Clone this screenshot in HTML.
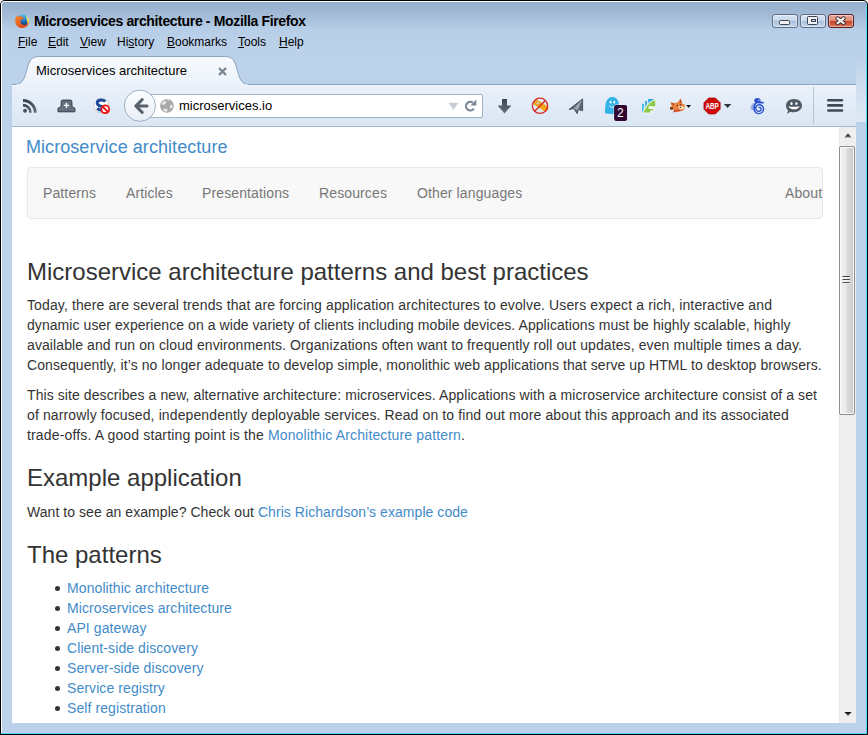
<!DOCTYPE html>
<html><head><meta charset="utf-8">
<style>
*{margin:0;padding:0;box-sizing:border-box}
html,body{width:868px;height:735px;overflow:hidden;background:#fff}
body{position:relative;font-family:"Liberation Sans",sans-serif}
.a{position:absolute;white-space:nowrap}
#win{position:absolute;left:0;top:0;width:868px;height:735px;border-radius:5px 5px 0 0;background:#000}
#frame{position:absolute;left:1px;top:1px;width:866px;height:733px;border-radius:4px 4px 0 0;
 background:linear-gradient(#fff 0,#fff 1px,#97b0cf 1px,#9cb5d2 8px,#a8bfda 18px,#b7cee8 28px,#bbd1ea 40px,#bcd2ea 56px,#bcd2ea 735px);
 box-shadow:inset 1px 0 0 #fff}
#cyanr{position:absolute;left:866px;top:4px;width:1px;height:730px;background:#52d6fa}
#cyanb{position:absolute;left:1px;top:733px;width:866px;height:1px;background:#52d6fa}
.title{font-size:14px;font-weight:bold;color:#000;letter-spacing:-.35px;left:34px;top:13px;line-height:17px}
.menu{font-size:12px;color:#000;top:35px;line-height:15px}
.menu u{text-decoration:underline;text-underline-offset:0.5px;text-decoration-thickness:1px}
.wbtn{position:absolute;top:14px;height:14px;width:26px;border:1px solid #5f6f86;border-radius:3px;
 background:linear-gradient(#d6e3f2 0,#c8d9ed 45%,#a9c1dd 52%,#b4cae4 75%,#c4d7ee 100%);box-shadow:inset 0 0 0 1px rgba(255,255,255,.45)}
.wbtn.cl{border-color:#5a1a22;background:linear-gradient(#eba999 0,#e08d78 45%,#c9472d 52%,#cf5a3f 75%,#de7b60 100%)}
.gl{position:absolute;background:#f2f2f2;border:1px solid #3c4350}
#toolbar{position:absolute;left:12px;top:84px;width:844px;height:43px;
 background:linear-gradient(#eaf1fa,#dae6f4);border-bottom:1px solid #a7b9ce}
#content{position:absolute;left:12px;top:127px;width:827px;height:596px;background:#fff;overflow:hidden}
#sb{position:absolute;left:839px;top:127px;width:17px;height:596px;background:linear-gradient(90deg,#e4e4e4 0,#eeeeee 1px,#efefef 100%)}
.c{font-size:14px;color:#333;line-height:20px}
.lk{color:#428bca}
.h{font-size:24px;color:#333;line-height:28px}
.nv{color:#777;letter-spacing:.12px}
</style></head><body>
<div id="win"></div>
<div id="frame"></div>
<div id="cyanr"></div><div id="cyanb"></div>
<div class="a" style="left:856px;top:56px;width:10px;height:66px;background:linear-gradient(#bcd2ea,#d3e1f0 60%,#dfe9f4)"></div>

<!-- firefox logo -->
<svg class="a" style="left:15px;top:14px" width="14" height="14" viewBox="0 0 14 14">
 <defs><linearGradient id="ffg" x1="0" y1="0" x2="0" y2="1"><stop offset="0" stop-color="#4cc0ee"/><stop offset=".55" stop-color="#1f7bc4"/><stop offset="1" stop-color="#14306e"/></linearGradient>
 <linearGradient id="ffo" x1="0" y1="0" x2="1" y2="1"><stop offset="0" stop-color="#f58a2a"/><stop offset=".6" stop-color="#e4561e"/><stop offset="1" stop-color="#d63a18"/></linearGradient>
 <linearGradient id="ffy" x1="0" y1="0" x2="0" y2="1"><stop offset="0" stop-color="#fff3b0"/><stop offset=".5" stop-color="#ffd428"/><stop offset="1" stop-color="#f39a1a"/></linearGradient></defs>
 <circle cx="7.8" cy="6.2" r="5.7" fill="url(#ffg)"/>
 <path d="M11.2 1.8C13.2 3.4 14.2 5.6 14 8 13.6 10.5 12.6 11.5 11.5 12.4 12.8 10 12.6 7 11.5 4.6Z" fill="url(#ffy)"/>
 <path d="M7 14C3.2 14 0.3 11 0.3 7.2C0.3 5 0.8 3 1.2 1.3L2.6 2.8C3.8 2.2 5.5 2 6.8 2.6L9.4 4.4 7.8 4.7C6.5 5.2 5.6 6.4 5.4 7.6 5.6 9.6 7.4 11 9.6 11 11.4 11 12.8 9.8 13.6 8.2 13.4 11.6 10.6 14 7 14Z" fill="url(#ffo)"/>
</svg>
<div class="a title">Microservices architecture - Mozilla Firefox</div>

<!-- window buttons -->
<div class="wbtn" style="left:772px"><div class="gl" style="left:6px;top:5px;width:11px;height:5px;border-radius:1.5px"></div></div>
<div class="wbtn" style="left:800px"><div class="gl" style="left:6px;top:1px;width:11px;height:9px;border-radius:1.5px"><div style="position:absolute;left:3px;top:2px;width:5px;height:3px;border:1px solid #3c4350;background:#b9cde6"></div></div></div>
<div class="wbtn cl" style="left:828px">
 <svg style="position:absolute;left:5px;top:1px" width="14" height="11" viewBox="0 0 14 11"><path d="M3.6 2.3L9.6 7.1M9.6 2.3L3.6 7.1" stroke="#3a2a30" stroke-width="4" stroke-linecap="round"/><path d="M3.6 2.3L9.6 7.1M9.6 2.3L3.6 7.1" stroke="#f2f2f2" stroke-width="2.3" stroke-linecap="round"/></svg></div>

<div class="a menu" style="left:18px"><u>F</u>ile</div>
<div class="a menu" style="left:48px"><u>E</u>dit</div>
<div class="a menu" style="left:80px"><u>V</u>iew</div>
<div class="a menu" style="left:117px">Hi<u>s</u>tory</div>
<div class="a menu" style="left:167px"><u>B</u>ookmarks</div>
<div class="a menu" style="left:238px"><u>T</u>ools</div>
<div class="a menu" style="left:279px"><u>H</u>elp</div>

<div id="toolbar"></div>
<svg class="a" style="left:0;top:0" width="868" height="130" viewBox="0 0 868 130">
 <defs><linearGradient id="tg" x1="0" y1="56" x2="0" y2="86" gradientUnits="userSpaceOnUse"><stop offset="0" stop-color="#f8fbfe"/><stop offset="1" stop-color="#ebf2fa"/></linearGradient></defs>
 <path d="M12 84.5L15 84.5C23 84.5 25 77 27 69 29 62 31 56.5 38.5 56.5L225.5 56.5C233 56.5 235 62 237 69 239 77 241 84.5 249 84.5L856 84.5" fill="url(#tg)" stroke="#8ba2bd" stroke-width="1"/>
 <rect x="12" y="85" width="844" height="1" fill="#f4f8fd" opacity=".8"/>
 <path d="M16 85L248 85" stroke="#ebf2fa" stroke-width="1"/>
 <line x1="813.5" y1="87" x2="813.5" y2="124" stroke="#b4c3d5" stroke-width="1"/>
</svg>
<div class="a" style="left:36px;top:63px;font-size:13px;color:#000;line-height:15px">Microservices architecture</div>
<svg class="a" style="left:217px;top:66px" width="11" height="11" viewBox="0 0 11 11"><path d="M2 2L9 9M9 2L2 9" stroke="#7b8592" stroke-width="2.4"/></svg>
<!-- urlbar -->
<div class="a" style="left:146px;top:94px;width:337px;height:24px;background:#fff;border:1px solid #a3b3c6;border-radius:0 2px 2px 0"></div>
<svg class="a" style="left:0;top:84px" width="868" height="42" viewBox="0 84 868 42">
 <defs>
  <linearGradient id="ig" x1="0" y1="0" x2="0" y2="1"><stop offset="0" stop-color="#3c454f"/><stop offset="1" stop-color="#66717d"/></linearGradient>
  <linearGradient id="bg" x1="0" y1="0" x2="0" y2="1"><stop offset="0" stop-color="#fbfcfe"/><stop offset="1" stop-color="#e9eff7"/></linearGradient>
  <linearGradient id="fg" x1="0" y1="0" x2="1" y2="1"><stop offset="0" stop-color="#b8e07a"/><stop offset="1" stop-color="#6cb828"/></linearGradient>
  <linearGradient id="bl" x1="0" y1="0" x2="0" y2="1"><stop offset="0" stop-color="#1aa4e0"/><stop offset="1" stop-color="#7cccee"/></linearGradient>
  <radialGradient id="sg" cx=".4" cy=".35" r=".7"><stop offset=".6" stop-color="#fff"/><stop offset="1" stop-color="#a8a8a8"/></radialGradient>
 </defs>
 <!-- rss -->
 <g fill="none" stroke="url(#ig)">
  
  <path d="M23 100.45A12.25 12.25 0 0 1 35.25 112.7" stroke-width="2.9"/>
 </g>
 <circle cx="25" cy="110.8" r="2" fill="#4a535e"/>
 <!-- tab add -->
 <path d="M58 111.8L58 108.5C58 108 58.4 108 59 107.8 60.5 107.3 61.2 106.5 61.2 104L61.2 101.5C61.2 100.6 61.8 100.1 62.7 100.1L70.4 100.1C71.3 100.1 71.9 100.6 71.9 101.5L71.9 104C71.9 106.5 72.6 107.3 74.1 107.8 74.6 108 74.9 108 74.9 108.5L74.9 111.8Z" fill="#63707d" stroke="#323b45" stroke-width="1"/>
 <path d="M66.5 102.8V108M63.9 105.4H69.1" stroke="#fff" stroke-width="1.4"/>
 <!-- S block -->
 <circle cx="101.9" cy="105.7" r="7.6" fill="url(#sg)" stroke="#c4c4c4" stroke-width=".6"/>
 <path d="M105.4 101.6C104.4 100.5 102.9 100 101.2 100 98.9 100 97.2 101.2 97.2 103.1 97.2 107.2 104 105.6 104 108.2 104 109.5 102.6 110 101.3 110 99.6 110 98.3 109.3 97.4 108.3" fill="none" stroke="#1c4a9c" stroke-width="2.9"/>
 <circle cx="105.3" cy="109.3" r="3.9" fill="#fff" stroke="#f00c0c" stroke-width="1.7"/>
 <path d="M102.6 106.6L108 112" stroke="#f00c0c" stroke-width="1.9"/>
 <path d="M23 105.2A7.5 7.5 0 0 1 30.5 112.7" stroke="url(#ig)" stroke-width="2.7" fill="none"/>
 <!-- back button -->
 <circle cx="139.9" cy="105.7" r="15.6" fill="url(#bg)" stroke="#9eb0c4" stroke-width="1"/>
 <path d="M147 106H135.8M142.2 99.6L135.8 106 142.2 112.4" fill="none" stroke="#56616d" stroke-width="3" stroke-linecap="round" stroke-linejoin="round"/>
 <!-- globe -->
 <circle cx="167" cy="105.8" r="6.9" fill="#a9a9a9"/>
 <path d="M162.3 102.2C163.8 100.8 165.8 100.8 166.3 102 166.6 103.2 164.8 104.6 163.2 105 162 105.2 161.6 103.4 162.3 102.2ZM163.6 109C165 108 167 108.4 167.6 109.6 168 111 166.2 112.3 164.6 111.6 163.6 111 163.1 109.8 163.6 109ZM170.6 104.6C171.6 104.2 172.6 105.2 172.6 106.4 172.4 107.8 171.4 108.8 170.6 108.6 169.8 108.2 169.8 105.2 170.6 104.6ZM166.8 99.6C167.8 99.3 169.2 99.6 169.4 100.2 168.8 100.9 167.2 100.9 166.8 99.6Z" fill="#e6e6e6"/>
 <!-- dropdown & reload -->
 <path d="M448.5 102.8H458.5L453.5 110Z" fill="#c9ced4"/>
 <path d="M473.8 108.6A4.3 4.3 0 1 1 472.8 102.6" fill="none" stroke="#7d8896" stroke-width="2.2"/>
 <path d="M476.3 99.6L476.3 105.6 470.4 105.6Z" fill="#7d8896"/>
 <!-- download -->
 <path d="M502 99H507V105.6H511.3L504.5 113.4 497.7 105.6H502Z" fill="url(#ig)"/>
 <!-- no cookie -->
 <path d="M534.5 100.8C535.5 99.8 537 99.6 538 100.2L547.6 106.6C548.6 107.3 548.8 108.4 548 109.4L546.8 110.8C546 111.6 545 111.6 544 111L535 105.2C533.8 104.4 533.4 102.6 534.5 100.8Z" fill="#f2a61c"/>
 <circle cx="537.8" cy="103.2" r="1.1" fill="#b8d4f0"/>
 <circle cx="540" cy="105.8" r="7.6" fill="none" stroke="#d42c2c" stroke-width="1.3"/>
 <path d="M534.6 111.2L545.4 100.4" stroke="#d42c2c" stroke-width="1.4"/>
 <!-- plane -->
 <path d="M569 109.5L582.6 98.8 582.6 110.8 578.3 109.6 577.2 113.8 573.8 108.6Z" fill="#5c6772" stroke="#3a434d" stroke-width=".8" stroke-linejoin="round"/>
 <path d="M573.8 108.6L582.2 99.6 577.6 110.2" fill="#c9d3dd" opacity=".6"/>
 <!-- ghostery -->
 <path d="M605 112C605 108 605.5 104 606 102 607 99 609.5 97 612.2 97 615.5 97 618.6 99.5 618.8 103.5 619 107 619.2 110 619.6 113 618.4 113.6 617.6 112.6 616.8 113.6 615.8 114.4 614.8 113 613.6 114 612.4 114.6 611.4 113.4 610.2 114 609 114.4 608 113 606.8 113.6 606 113.8 605 113.4 605 112Z" fill="#34b4e6"/>
 <ellipse cx="610.6" cy="102.2" rx="0.9" ry="1.4" fill="#fff"/>
 <ellipse cx="614.3" cy="102.2" rx="0.9" ry="1.4" fill="#fff"/>
 <path d="M609.4 106C610.6 107.4 612.6 107.6 614.2 106.8" fill="none" stroke="#fff" stroke-width="1"/>
 <rect x="613.6" y="104.6" width="14" height="16.8" rx="2.5" fill="#fff" opacity=".7"/>
 <rect x="614.1" y="105" width="13" height="15.9" rx="2" fill="#300530"/>
 <!-- feather -->
 <path d="M642 103.8H644V113H642ZM645.1 100.9H647.1V110H645.1ZM648.2 98.9H653.6V104H648.2Z" fill="url(#bl)"/>
 <path d="M642.8 113C645.5 106 650 100.5 655.8 99.6V106.8H649V108.5H653.8V110.8H650.7V113Z" fill="url(#fg)" stroke="#fff" stroke-width=".9" stroke-linejoin="round"/>
 <!-- fox -->
 <path d="M670.5 102.2L674.6 103.2 677.8 102.2 680.6 98.4 682.2 103.4 684.8 104.8 685.2 107.2 683.4 110.2 679.4 111.8 675 111.6 673 112.6 674 109.6 670 109.4 671.6 106.6Z" fill="#e8823e"/>
 <path d="M671 102.4L674.4 103.6 673.4 106.2ZM680.6 98.6L682 103.2 679.4 102.6Z" fill="#c0502a"/>
 <path d="M678 106.6C679.6 106 682.4 106.2 685 107 684 109 682 109.4 679.6 109.2Z" fill="#fbe6bc"/>
 <path d="M674.4 109.8L679.6 109.4 680.8 110.8 676.4 111.8 673.4 112.6Z" fill="#d0503a"/>
 <circle cx="677.4" cy="105.6" r=".7" fill="#402020"/>
 <circle cx="680.6" cy="104.6" r=".6" fill="#402020"/>
 <circle cx="680.4" cy="107.4" r=".7" fill="#503050"/>
 <path d="M670 107H673V109.6H670Z" fill="#7a4020"/>
 <path d="M686.2 105H691L688.6 107.8Z" fill="#000"/>
 <!-- abp -->
 <path d="M708.7 97.9H715.4L720.2 102.7V109.2L715.4 114H708.7L703.9 109.2V102.7Z" fill="#cf0a0a" stroke="#a00000" stroke-width=".6"/>
 <text x="705.4" y="109.2" font-family="Liberation Sans" font-size="8.6" font-weight="bold" fill="#fff" textLength="13.4" lengthAdjust="spacingAndGlyphs">ABP</text>
 <path d="M723.9 104H731.3L727.6 108Z" fill="#2f3842"/>
 <!-- seahorse -->
 <path d="M755.6 103L751.6 103.8 752.6 104.8 750.2 105.6 751.8 106.6 750 107.6 751.8 108.4 750.4 109.4 752.8 110 754.6 110.4Z" fill="#93aae2"/>
 <path d="M756.6 102.4Q754 104.6 754 108.8A4.9 4.9 0 0 0 759 113.6A4.65 4.65 0 0 0 763.5 108.8A4.25 4.25 0 0 0 759 104.8A3.5 3.5 0 0 0 755.8 108.8A2.9 2.9 0 0 0 759 111.4A2.3 2.3 0 0 0 761 108.8A1.7 1.7 0 0 0 759 107.4" fill="none" stroke="#2a52cc" stroke-width="1.4" stroke-linecap="round"/>
 <ellipse cx="757.4" cy="100.6" rx="3.1" ry="2.6" fill="#2a52cc"/>
 <path d="M759 101.2L763.9 102 763.6 103.4 758.4 103.6Z" fill="#2a52cc"/>
 <circle cx="758.8" cy="100.4" r=".7" fill="#cfe0ff"/>
 <!-- chat -->
 <path d="M794 99C798.5 99 802 101.8 802 105.6 802 109.4 798.5 112.3 794 112.3 792.8 112.3 791.6 112.1 790.6 111.7L786.9 113.8 788.2 110.6C786.8 109.3 786 107.6 786 105.6 786 101.8 789.5 99 794 99Z" fill="#4f5964"/>
 <ellipse cx="791.5" cy="103.6" rx="1.1" ry="1.5" fill="#fff"/>
 <ellipse cx="796.4" cy="103.6" rx="1.1" ry="1.5" fill="#fff"/>
 <path d="M788.6 106.2C789.4 110.4 798.6 110.4 799.4 106.2 795.6 107 792.4 107 788.6 106.2Z" fill="#fff"/>
 <!-- hamburger -->
 <path d="M828.3 100.3H842M828.3 105.4H842M828.3 110.5H842" stroke="#3f4a58" stroke-width="2.6" stroke-linecap="round"/>
</svg>
<div class="a" style="left:179px;top:98px;font-size:13px;color:#000;line-height:15px">microservices.io</div>
<div class="a" style="left:617px;top:106.8px;font-size:12px;color:#fff;line-height:13px">2</div>


<div id="content">
 <div class="a" style="left:14px;top:9px;font-size:18px;color:#428bca;line-height:22px;letter-spacing:.06px">Microservice architecture</div>
 <div class="a" style="left:15px;top:40px;width:796px;height:52px;background:#f8f8f8;border:1px solid #e7e7e7;border-radius:4px"></div>
 <div class="a c nv" style="left:31px;top:56px">Patterns</div>
 <div class="a c nv" style="left:114px;top:56px">Articles</div>
 <div class="a c nv" style="left:190px;top:56px">Presentations</div>
 <div class="a c nv" style="left:307px;top:56px">Resources</div>
 <div class="a c nv" style="left:405px;top:56px">Other languages</div>
 <div class="a c nv" style="left:773px;top:56px">About</div>

 <div class="a h" style="left:15px;top:131px">Microservice architecture patterns and best practices</div>
 <div class="a c" style="left:15px;top:168px;letter-spacing:.12px">Today, there are several trends that are forcing application architectures to evolve. Users expect a rich, interactive and</div>
 <div class="a c" style="left:15px;top:188px;letter-spacing:.065px">dynamic user experience on a wide variety of clients including mobile devices. Applications must be highly scalable, highly</div>
 <div class="a c" style="left:15px;top:208px;letter-spacing:.095px">available and run on cloud environments. Organizations often want to frequently roll out updates, even multiple times a day.</div>
 <div class="a c" style="left:15px;top:228px;letter-spacing:.086px">Consequently, it’s no longer adequate to develop simple, monolithic web applications that serve up HTML to desktop browsers.</div>
 <div class="a c" style="left:15px;top:258px;letter-spacing:.086px">This site describes a new, alternative architecture: microservices. Applications with a microservice architecture consist of a set</div>
 <div class="a c" style="left:15px;top:278px;letter-spacing:.117px">of narrowly focused, independently deployable services. Read on to find out more about this approach and its associated</div>
 <div class="a c" style="left:15px;top:298px;letter-spacing:.15px">trade-offs. A good starting point is the <span class="lk">Monolithic Architecture pattern</span>.</div>

 <div class="a h" style="left:15px;top:337px">Example application</div>
 <div class="a c" style="left:15px;top:375px;letter-spacing:.055px">Want to see an example? Check out <span class="lk">Chris Richardson’s example code</span></div>
 <div class="a h" style="left:15px;top:414px">The patterns</div>
 <div class="a" style="left:42.8px;top:459.1px;width:5.2px;height:5.2px;border-radius:50%;background:#333"></div>
<div class="a" style="left:42.8px;top:479.1px;width:5.2px;height:5.2px;border-radius:50%;background:#333"></div>
<div class="a" style="left:42.8px;top:499.1px;width:5.2px;height:5.2px;border-radius:50%;background:#333"></div>
<div class="a" style="left:42.8px;top:519.1px;width:5.2px;height:5.2px;border-radius:50%;background:#333"></div>
<div class="a" style="left:42.8px;top:539.1px;width:5.2px;height:5.2px;border-radius:50%;background:#333"></div>
<div class="a" style="left:42.8px;top:559.1px;width:5.2px;height:5.2px;border-radius:50%;background:#333"></div>
<div class="a" style="left:42.8px;top:579.1px;width:5.2px;height:5.2px;border-radius:50%;background:#333"></div>
<div class="a c" style="left:55px;top:451px;color:#428bca;letter-spacing:.09px">Monolithic architecture</div>
 <div class="a c" style="left:55px;top:471px;color:#428bca;letter-spacing:.09px">Microservices architecture</div>
 <div class="a c" style="left:55px;top:491px;color:#428bca;letter-spacing:.09px">API gateway</div>
 <div class="a c" style="left:55px;top:511px;color:#428bca;letter-spacing:.09px">Client-side discovery</div>
 <div class="a c" style="left:55px;top:531px;color:#428bca;letter-spacing:.09px">Server-side discovery</div>
 <div class="a c" style="left:55px;top:551px;color:#428bca;letter-spacing:.09px">Service registry</div>
 <div class="a c" style="left:55px;top:571px;color:#428bca;letter-spacing:.09px">Self registration</div>
</div>
<div id="sb">
 <svg class="a" style="left:5px;top:6px" width="8" height="6" viewBox="0 0 8 6"><defs><linearGradient id="ar" x1="0" y1="0" x2="0" y2="1"><stop offset="0" stop-color="#000"/><stop offset="1" stop-color="#777"/></linearGradient></defs><path d="M4 0.5L7.6 4.5H0.4Z" fill="url(#ar)"/></svg>
 <div class="a" style="left:0;top:19px;width:16px;height:269px;border:1px solid #8e8e8e;border-radius:2px;box-shadow:inset 0 0 0 1px #fafafa;background:linear-gradient(90deg,#f3f3f3 0,#e9e9ea 45%,#dcdcde 48%,#d2d2d5 80%,#c6c6ca 100%)"></div>
 <svg class="a" style="left:3px;top:148px" width="9" height="9" viewBox="0 0 9 9"><path d="M0.5 1.5H7.8M0.5 4.6H7.8M0.5 7.7H7.8" stroke="#3a3a3a" stroke-width="1"/><path d="M0.5 2.5H7.8M0.5 5.6H7.8M0.5 8.7H7.8" stroke="#fff" stroke-width="1" opacity=".8"/></svg>
 <svg class="a" style="left:5px;top:584px" width="8" height="6" viewBox="0 0 8 6"><path d="M0.4 1H7.6L4 5Z" fill="url(#ar)"/></svg>
</div>
</body></html>
